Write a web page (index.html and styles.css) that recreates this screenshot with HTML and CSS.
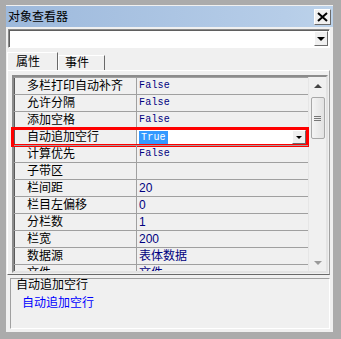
FILE: index.html
```html
<!DOCTYPE html>
<html lang="zh-CN">
  <head>
    <meta charset="UTF-8" />
    <title>对象查看器</title>
    <link rel="stylesheet" href="styles.css">
  </head>
  <body>
    <div class="window">
      <div class="titlebar">
        <span class="titlebar__text">对象查看器</span>
        <span class="titlebar__close">
          <svg width="11" height="10" viewBox="0 0 11 10"><path d="M1 1 L10 9 M10 1 L1 9" stroke="#000" stroke-width="2"/></svg>
        </span>
      </div>

      <div class="combo">
        <span class="dropbtn"><i class="arrow"></i></span>
      </div>

      <div class="tabs">
        <span class="tab tab--active">属性</span>
        <span class="tab">事件</span>
      </div>

      <div class="page">
        <div class="grid">
          <div class="list">
            <div class="row"><span class="row__name">多栏打印自动补齐</span><span class="row__value row__value--mono">False</span></div>
            <div class="row"><span class="row__name">允许分隔</span><span class="row__value row__value--mono">False</span></div>
            <div class="row"><span class="row__name">添加空格</span><span class="row__value row__value--mono">False</span></div>
            <div class="row row--current">
              <span class="row__name">自动追加空行</span>
              <span class="row__value row__editor">
                <span class="row__value--mono row__selected">True</span>
                <span class="dropbtn dropbtn--small"><i class="arrow arrow--small"></i></span>
              </span>
            </div>
            <div class="row"><span class="row__name">计算优先</span><span class="row__value row__value--mono">False</span></div>
            <div class="row"><span class="row__name">子带区</span><span class="row__value"></span></div>
            <div class="row"><span class="row__name">栏间距</span><span class="row__value">20</span></div>
            <div class="row"><span class="row__name">栏目左偏移</span><span class="row__value">0</span></div>
            <div class="row"><span class="row__name">分栏数</span><span class="row__value">1</span></div>
            <div class="row"><span class="row__name">栏宽</span><span class="row__value">200</span></div>
            <div class="row"><span class="row__name">数据源</span><span class="row__value">表体数据</span></div>
            <div class="row row--cut"><span class="row__name">文件</span><span class="row__value">文件</span></div>
          </div>
          <div class="scrollbar">
            <span class="scrollbar__btn"><i class="arrow arrow--up"></i></span>
            <span class="scrollbar__thumb"><i></i><i></i><i></i></span>
            <span class="scrollbar__space"></span>
            <span class="scrollbar__btn"><i class="arrow arrow--grey"></i></span>
          </div>
        </div>
      </div>

      <div class="desc">
        <div class="desc__title">自动追加空行</div>
        <div class="desc__text">自动追加空行</div>
      </div>
    </div>
  </body>
</html>
```

FILE: styles.css
```css
body {
  margin: 0;
  background-color: #ababab;
  font-family: "Liberation Sans", "Noto Sans CJK SC", sans-serif;
  font-size: 12px;
}

.window {
  width: 341px;
  height: 339px;
  box-sizing: border-box;
  border-style: solid;
  border-color: #ababab;
  border-width: 5px 8px 7px 6px;
  background-color: #f0f0f0;
  display: flex;
  flex-direction: column;
}

.titlebar {
  margin-top: 1px;
  height: 21px;
  display: flex;
  align-items: center;
  justify-content: space-between;
  background: linear-gradient(to right, #9db9dc, #b6cde8 85%, #bcd2ea);
}

.titlebar__text {
  padding-left: 2px;
  line-height: 14px;
}

.titlebar__close {
  width: 17px;
  height: 16px;
  margin-right: 2px;
  box-sizing: border-box;
  display: flex;
  align-items: center;
  justify-content: center;
  background-color: #f0f0f0;
  border: 1px solid;
  border-color: #ffffff #6b6b6b #6b6b6b #ffffff;
}

.combo {
  margin: 2px 3px 0 2px;
  height: 19px;
  box-sizing: border-box;
  border: 1px solid;
  border-color: #8a8a8a #ffffff #ffffff #8a8a8a;
  box-shadow: inset 1px 1px 0 #5f5f5f;
  background-color: #ffffff;
  display: flex;
  justify-content: flex-end;
  align-items: center;
  padding-right: 1px;
}

.dropbtn {
  width: 14px;
  height: 15px;
  box-sizing: border-box;
  background-color: #f0f0f0;
  border: 1px solid;
  border-color: #ffffff #6b6b6b #6b6b6b #ffffff;
  display: flex;
  align-items: center;
  justify-content: center;
}

.dropbtn--small {
  width: 14px;
  height: 14px;
}

.arrow {
  width: 0;
  height: 0;
  border-left: 4px solid transparent;
  border-right: 4px solid transparent;
  border-top: 4px solid #000000;
}

.arrow--small {
  border-left-width: 3px;
  border-right-width: 3px;
  border-top-width: 3px;
}

.arrow--up {
  border-top: 0;
  border-bottom: 4px solid #444444;
}

.arrow--grey {
  border-top-color: #9a9a9a;
}

.tabs {
  margin-top: 4px;
  height: 18px;
  display: flex;
  align-items: flex-end;
  padding-left: 1px;
}

.tab {
  height: 15px;
  width: 47px;
  box-sizing: border-box;
  padding-left: 6px;
  line-height: 14px;
  font-size: 12px;
  white-space: nowrap;
  border: 1px solid;
  border-bottom: 0;
  border-color: #ffffff #696969 transparent #ffffff;
}

.tab--active {
  height: 18px;
  width: 51px;
  padding: 2px 0 0 8px;
}

.page {
  margin: 0 3px 0 1px;
  border: 1px solid;
  border-color: #ffffff #a0a0a0 #696969 #ffffff;
  padding: 4px 1px 1px 4px;
}

.grid {
  height: 198px;
  box-sizing: border-box;
  border: 2px solid;
  border-color: #8c8c8c #e3e3e3 #e3e3e3 #8c8c8c;
  box-shadow: inset 1px 1px 0 #5a5a5a;
  display: flex;
  background-color: #f0f0f0;
}

.list {
  flex: 1;
  display: flex;
  flex-direction: column;
}

.row {
  position: relative;
  height: 17px;
  box-sizing: border-box;
  border-top: 1px solid #a0a0a0;
  display: flex;
  line-height: 16px;
  flex-shrink: 0;
}

.row--cut {
  height: 7px;
  overflow: hidden;
}

.row--current::after {
  content: '';
  position: absolute;
  top: -2px;
  bottom: -2px;
  left: -3px;
  right: -1px;
  border: 3px solid #ff0000;
}

.row__name {
  width: 123px;
  flex-shrink: 0;
  box-sizing: border-box;
  padding-left: 13px;
  border-right: 1px solid #a0a0a0;
  color: #000000;
}

.row__value {
  flex: 1;
  padding-left: 2px;
  color: #000080;
}

.row__value--mono {
  font-family: "Liberation Mono", monospace;
  font-size: 10px;
  letter-spacing: 0.2px;
}

.row__editor {
  display: flex;
  align-items: center;
  justify-content: space-between;
  background-color: #ffffff;
  padding-right: 2px;
}

.row__selected {
  background-color: #3399ff;
  color: #ffffff;
  line-height: 13px;
  padding: 0 2px;
}

.scrollbar {
  width: 17px;
  display: flex;
  flex-direction: column;
  align-items: center;
  background-color: #f0f0f0;
  border-left: 1px solid #e6e6e6;
}

.scrollbar__btn {
  height: 17px;
  width: 15px;
  display: flex;
  align-items: center;
  justify-content: center;
}

.scrollbar__thumb {
  margin-top: 3px;
  width: 14px;
  height: 42px;
  box-sizing: border-box;
  border: 1px solid #a8a8a8;
  border-radius: 2px;
  background: linear-gradient(to right, #f4f4f4, #e2e2e2);
  display: flex;
  flex-direction: column;
  align-items: center;
  justify-content: center;
  gap: 1px;
}

.scrollbar__thumb i {
  width: 7px;
  height: 1px;
  background-color: #777777;
}

.scrollbar__space {
  flex: 1;
}

.desc {
  margin: 3px 3px 0 4px;
  height: 51px;
  box-sizing: border-box;
  border: 1px solid;
  border-color: #a0a0a0 #ffffff #ffffff #a0a0a0;
  line-height: 13px;
}

.desc__title {
  padding-left: 5px;
  color: #000000;
}

.desc__text {
  margin-top: 5px;
  padding-left: 11px;
  color: #0000ff;
}
```
